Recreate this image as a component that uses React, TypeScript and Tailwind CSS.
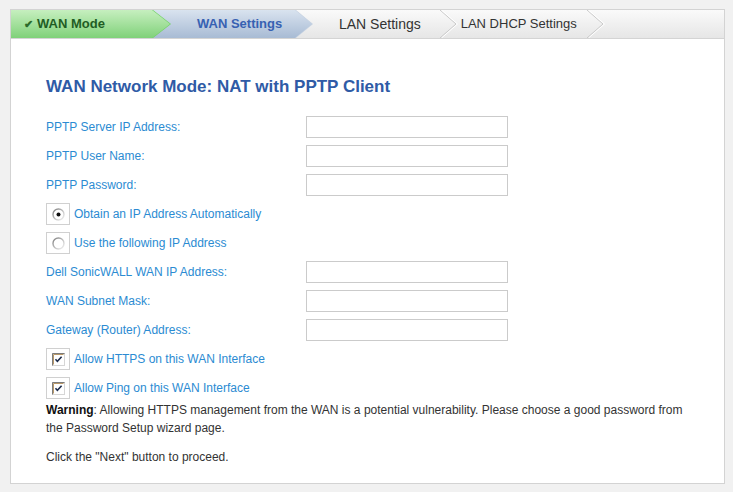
import React from 'react';

const FONT = { fontFamily: '"Liberation Sans", Arial, sans-serif' };

function Chevron() {
  return (
    <svg width="18" height="28" viewBox="0 0 18 28" className="shrink-0">
      <polyline points="0,0 16,14 0,28" fill="none" stroke="#c9c9c9" strokeWidth="1" />
      <polyline points="1.5,0 17.5,14 1.5,28" fill="none" stroke="#ffffff" strokeWidth="1" />
    </svg>
  );
}

function Field({ label }: { label: string }) {
  return (
    <div className="flex h-[22px] items-center">
      <span className="w-[260px] text-[12px] text-[#2b8bd2]">{label}</span>
      <input
        type="text"
        className="h-[22px] w-[202px] border border-[#cbcbcb] bg-white outline-none"
      />
    </div>
  );
}

function Radio({ checked }: { checked?: boolean }) {
  return (
    <svg width="13" height="13" viewBox="0 0 13 13">
      <defs>
        <linearGradient id={checked ? 'rg1' : 'rg2'} x1="0" y1="0" x2="1" y2="1">
          <stop offset="0" stopColor="#7d7d7d" />
          <stop offset="0.55" stopColor="#c4c4c4" />
          <stop offset="1" stopColor="#f4f4f4" />
        </linearGradient>
      </defs>
      <circle cx="6.5" cy="6.5" r="5.5" fill="#fff" stroke={`url(#${checked ? 'rg1' : 'rg2'})`} strokeWidth="1.4" />
      {checked && <circle cx="6.5" cy="6.5" r="2" fill="#111" />}
    </svg>
  );
}

function Check() {
  return (
    <svg width="13" height="13" viewBox="0 0 13 13">
      <rect x="0.5" y="0.5" width="12" height="12" fill="#fff" stroke="#d6d6d6" />
      <path d="M0.5 12.5 V0.5 H12.5" fill="none" stroke="#7c7c7c" />
      <path d="M1.5 11.5 V1.5 H11.5" fill="none" stroke="#b89868" />
      <path d="M3.5 6.2 L5.4 8.4 L9.6 3.8" fill="none" stroke="#1c2b4a" strokeWidth="1.6" />
    </svg>
  );
}

function OptionRow({ children, label }: { children: React.ReactNode; label: string }) {
  return (
    <div className="flex h-[22px] items-center">
      <div className="flex h-[22px] w-[24px] items-center justify-center border border-[#d0d0d0] bg-white">
        {children}
      </div>
      <span className="ml-[4px] text-[12px] text-[#2b8bd2]">{label}</span>
    </div>
  );
}

export default function App() {
  return (
    <div className="h-[492px] w-[733px] overflow-hidden bg-[#f1f1f1] pl-[10px] pt-[9px]" style={FONT}>
      <div className="h-[475px] w-[715px] border border-[#d3d3d3] bg-white">
        {/* Wizard steps */}
        <div className="flex h-[29px] items-center border-b border-[#d4d4d4] bg-linear-to-b from-[#fafafa] to-[#e6e6e6]">
          <div className="relative z-10 h-[28px] w-[160px] bg-[#74d266] [clip-path:polygon(0_0,142px_0,160px_50%,142px_100%,0_100%)]">
            <div className="flex h-[28px] w-[159px] items-center bg-linear-to-b from-[#c6efbf] to-[#7fd179] pl-[13px] [clip-path:polygon(0_0,141px_0,159px_50%,141px_100%,0_100%)]">
              <span className="mr-[4px] text-[11px] font-bold text-[#2c6b2c]">✔</span>
              <span className="text-[13px] font-bold text-[#1f5d24]">WAN Mode</span>
            </div>
          </div>
          <div className="-ml-[18px] h-[28px] w-[160px] bg-[#c7d3e2] [clip-path:polygon(0_0,143px_0,160px_50%,143px_100%,0_100%)]">
            <div className="flex h-[28px] w-[159px] items-center bg-linear-to-b from-[#d9e3ef] to-[#a8bbd4] pl-[44px] [clip-path:polygon(0_0,142px_0,159px_50%,142px_100%,0_100%)]">
              <span className="text-[13px] font-bold text-[#3761b2]">WAN Settings</span>
            </div>
          </div>
          <span className="ml-[26px] text-[14px] text-[#333]">LAN Settings</span>
          <div className="ml-[19px]">
            <Chevron />
          </div>
          <span className="ml-[3px] text-[13px] text-[#333]">LAN DHCP Settings</span>
          <div className="ml-[10px]">
            <Chevron />
          </div>
        </div>

        {/* Content */}
        <div className="pl-[35px] pt-[38px]">
          <h2 className="text-[17px] leading-[20px] font-bold text-[#2f5ba6]">
            WAN Network Mode: NAT with PPTP Client
          </h2>

          <div className="mt-[19px] flex flex-col gap-[7px]">
            <Field label="PPTP Server IP Address:" />
            <Field label="PPTP User Name:" />
            <Field label="PPTP Password:" />
            <OptionRow label="Obtain an IP Address Automatically">
              <Radio checked />
            </OptionRow>
            <OptionRow label="Use the following IP Address">
              <Radio />
            </OptionRow>
            <Field label="Dell SonicWALL WAN IP Address:" />
            <Field label="WAN Subnet Mask:" />
            <Field label="Gateway (Router) Address:" />
            <OptionRow label="Allow HTTPS on this WAN Interface">
              <Check />
            </OptionRow>
            <OptionRow label="Allow Ping on this WAN Interface">
              <Check />
            </OptionRow>
          </div>

          <p className="mt-[2px] w-[650px] text-[12px] leading-[18px] text-[#333]">
            <b className="text-[#111]">Warning</b>: Allowing HTTPS management from the WAN is a potential vulnerability. Please choose a good password from the Password Setup wizard page.
          </p>
          <p className="mt-[11px] text-[12px] leading-[18px] text-[#333]">
            Click the "Next" button to proceed.
          </p>
        </div>
      </div>
    </div>
  );
}
